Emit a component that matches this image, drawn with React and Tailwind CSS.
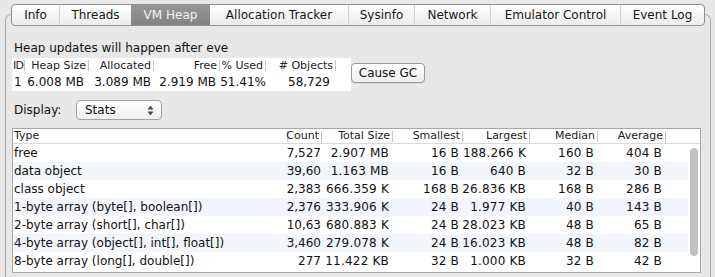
import React from "react";

const tabs = [
  ["Info", 47],
  ["Threads", 72],
  ["VM Heap", 79],
  ["Allocation Tracker", 138],
  ["Sysinfo", 66],
  ["Network", 76],
  ["Emulator Control", 130],
  ["Event Log", 84],
];
const selectedTab = 2;

// heap summary columns: label, width, value padding
const heapCols = [
  { label: "ID", w: 12, value: "1", left: true, vpr: 0 },
  { label: "Heap Size", w: 65, value: "6.008 MB", vpr: 5 },
  { label: "Allocated", w: 65, value: "3.089 MB", vpr: 3 },
  { label: "Free", w: 66, value: "2.919 MB", vpr: 4 },
  { label: "% Used", w: 46, value: "51.41%", vpr: 0 },
  { label: "# Objects", w: 70, value: "58,729", vpr: 6 },
];

const cols = [
  { label: "Type", w: 275 },
  { label: "Count", w: 34 },
  { label: "Total Size", w: 71 },
  { label: "Smallest", w: 70 },
  { label: "Largest", w: 67 },
  { label: "Median", w: 68 },
  { label: "Average", w: 68 },
];

const rows = [
  ["free", "7,527", "2.907 MB", "16 B", "188.266 K", "160 B", "404 B"],
  ["data object", "39,60", "1.163 MB", "16 B", "640 B", "32 B", "30 B"],
  ["class object", "2,383", "666.359 K", "168 B", "26.836 KB", "168 B", "286 B"],
  ["1-byte array (byte[], boolean[])", "2,376", "333.906 K", "24 B", "1.977 KB", "40 B", "143 B"],
  ["2-byte array (short[], char[])", "10,63", "680.883 K", "24 B", "28.023 KB", "48 B", "65 B"],
  ["4-byte array (object[], int[], float[])", "3,460", "279.078 K", "24 B", "16.023 KB", "48 B", "82 B"],
  ["8-byte array (long[], double[])", "277", "11.422 KB", "32 B", "1.000 KB", "32 B", "42 B"],
];

const Sep = () => <div className="h-[11px] w-px shrink-0 bg-[#c4c4c4]" />;

export default function App() {
  return (
    <div className="h-[277px] w-[715px] overflow-hidden bg-[#e8e8e8] pl-[5px] pt-[4px] font-['DejaVu_Sans',sans-serif] text-[12px] text-[#111]">
      {/* tab strip */}
      <div className="relative z-10 ml-[6px] flex h-[22px] w-[694px] overflow-hidden rounded-[4px] border border-[#8f8f8f] bg-linear-to-b from-white to-[#ebebeb]">
        {tabs.map(([name, w], i) => {
          const sel = i === selectedTab;
          const sep = i > 0 && !sel && i - 1 !== selectedTab;
          return (
            <div
              key={name}
              style={{ width: w }}
              className={`flex h-full shrink-0 items-center justify-center whitespace-nowrap ${
                sep ? "border-l border-[#d2d2d2]" : ""
              } ${sel ? "bg-linear-to-b from-[#979797] to-[#828282] text-[#f4f4f4]" : "text-[#161616]"}`}
            >
              {name}
            </div>
          );
        })}
      </div>

      {/* panel */}
      <div className="-mt-[12px] h-[270px] w-[706px] rounded-t-[6px] border border-b-0 border-[#ababab] pl-[6px] pt-[25px]">
        <div className="h-[16px] pl-[2px] leading-[16px]">Heap updates will happen after eve</div>

        <div className="mt-[2px] flex items-start">
          <div className="w-[339px] bg-white">
            <div className="flex h-[15px] text-[11px] leading-[15px] text-[#222]">
              {heapCols.map((c) => (
                <div
                  key={c.label}
                  style={{ width: c.w }}
                  className={`flex shrink-0 items-center whitespace-nowrap ${c.left ? "justify-start pl-[1px]" : "justify-end"}`}
                >
                  <span className={`shrink-0 ${c.left ? "pr-px tracking-[-0.8px]" : "pr-[2px]"}`}>{c.label}</span>
                  <Sep />
                </div>
              ))}
            </div>
            <div className="flex h-[18px] leading-[18px]">
              {heapCols.map((c) => (
                <div
                  key={c.label}
                  style={{ width: c.w, paddingRight: c.vpr }}
                  className={`shrink-0 whitespace-nowrap ${c.left ? "pl-[2px] text-left" : "flex justify-end"}`}
                >
                  {c.value}
                </div>
              ))}
            </div>
          </div>
          <button className="mt-[5px] flex h-[20px] w-[74px] items-center justify-center rounded-[4px] border border-[#9a9a9a] bg-linear-to-b from-white to-[#eeeeee] text-[12px] text-[#111] shadow-[0_1px_0_rgba(0,0,0,0.06)]">
            Cause GC
          </button>
        </div>

        <div className="mt-[9px] flex h-[20px] items-center">
          <span className="w-[64px] pl-[2px]">Display:</span>
          <div className="flex h-[20px] w-[86px] items-center justify-between rounded-[4px] border border-[#a2a2a2] bg-linear-to-b from-white to-[#f0f0f0] pl-[8px] pr-[7px]">
            <span>Stats</span>
            <svg width="7" height="11" viewBox="0 0 7 11">
              <polygon points="0.5,4.5 3.5,0.8 6.5,4.5" fill="#454545" />
              <polygon points="0.5,6.5 3.5,10.2 6.5,6.5" fill="#454545" />
            </svg>
          </div>
        </div>

        {/* stats table */}
        <div className="mt-[8px] flex h-[145px] w-[689px] flex-col border border-[#a6a6a6] bg-white">
          <div className="flex h-[15px] shrink-0 border-b border-[#dadada] text-[11px] leading-[14px] text-[#222]">
            {cols.map((c, i) => (
              <div
                key={c.label}
                style={{ width: c.w }}
                className={`flex shrink-0 items-center whitespace-nowrap ${i === 0 ? "justify-between pl-[1px]" : "justify-end"}`}
              >
                <span className="pr-[2px]">{c.label}</span>
                <Sep />
              </div>
            ))}
          </div>
          <div className="flex flex-1">
            <div className="w-[675px]">
              {rows.map((r, ri) => (
                <div key={r[0]} className={`flex h-[18px] leading-[18px] ${ri % 2 === 1 ? "bg-[#f2f5f9]" : "bg-white"}`}>
                  {r.map((v, ci) => (
                    <div
                      key={ci}
                      style={{ width: cols[ci].w }}
                      className={`shrink-0 whitespace-nowrap ${
                        ci === 0 ? "pl-[1px]" : ci === 1 ? "flex justify-end pr-px" : "flex justify-end pr-[4px] tracking-[0.2px]"
                      }`}
                    >
                      {v}
                    </div>
                  ))}
                </div>
              ))}
            </div>
            <div className="w-[12px] bg-white">
              <div className="ml-[2px] mt-[4px] h-[108px] w-[8px] rounded-full bg-[#c1c1c1]" />
            </div>
          </div>
        </div>
      </div>
    </div>
  );
}
